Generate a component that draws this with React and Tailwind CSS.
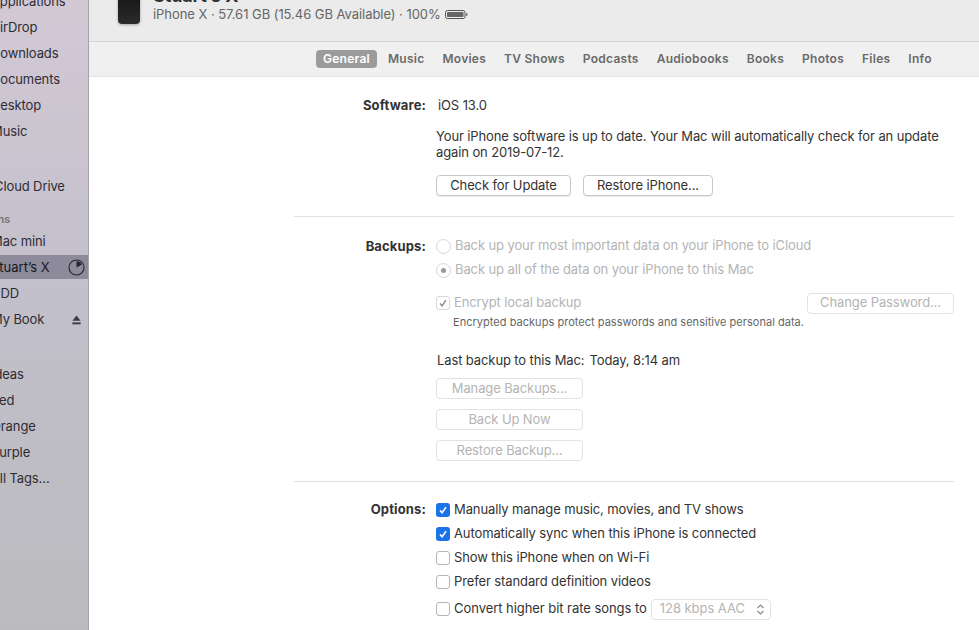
const font = { fontFamily: '"Inter", "Liberation Sans", sans-serif' };

function SideItem({ children, right }) {
  return (
    <div className="flex h-[26px] items-center justify-between whitespace-nowrap pr-[3px] text-[13px] text-[#2e2c33]">
      <span className="ml-[-9px]">{children}</span>
      {right}
    </div>
  );
}

function Pie() {
  return (
    <svg width="17" height="17" viewBox="0 0 17 17">
      <circle cx="8.5" cy="8.5" r="7.5" fill="none" stroke="#26252c" strokeWidth="1.1" />
      <path d="M8.5 8.5V2.2A6.3 6.3 0 0 1 14 5.4Z" fill="#26252c" />
    </svg>
  );
}

function Eject() {
  return (
    <svg width="9" height="10" viewBox="0 0 9 10" className="mr-[4px]">
      <path d="M4.5 0.5L8.6 5.8H0.4Z" fill="#3c3b40" />
      <rect x="0.4" y="7.4" width="8.2" height="1.9" fill="#3c3b40" />
    </svg>
  );
}

function Sidebar() {
  return (
    <div className="h-[630px] w-[89px] shrink-0 overflow-hidden border-r border-[#a5a4aa] bg-gradient-to-b from-[#d2c9d5] via-[#c1bfc9] to-[#bbbbbf]">
      <div className="mt-[-11px]">
        <SideItem>Applications</SideItem>
        <SideItem>AirDrop</SideItem>
        <SideItem>Downloads</SideItem>
        <SideItem>Documents</SideItem>
        <SideItem>Desktop</SideItem>
        <SideItem>Music</SideItem>
      </div>
      <div className="mt-[29px]">
        <SideItem>iCloud Drive</SideItem>
      </div>
      <div className="mt-[10px] flex h-[19px] items-center whitespace-nowrap text-[11px] font-semibold text-[#77757d]">
        <span className="ml-[-41px]">Locations</span>
      </div>
      <SideItem>Mac mini</SideItem>
      <div className="flex h-[24px] items-center justify-between whitespace-nowrap bg-[#8d8b9b] pr-[3px] text-[13px] tracking-normal text-[#16151b]">
        <span className="ml-[-9px] mt-[1px]">Stuart’s X</span>
        <Pie />
      </div>
      <div className="mt-[2px]">
        <SideItem>HDD</SideItem>
      </div>
      <SideItem right={<Eject />}>My Book</SideItem>
      <div className="mt-[29px]">
        <SideItem>Ideas</SideItem>
        <SideItem>Red</SideItem>
        <SideItem>Orange</SideItem>
        <SideItem>Purple</SideItem>
        <SideItem>All Tags...</SideItem>
      </div>
    </div>
  );
}

function Battery() {
  return (
    <svg width="23" height="9" viewBox="0 0 23 9" className="ml-[4px]">
      <rect x="0.5" y="0.5" width="19.5" height="8" rx="2" fill="none" stroke="#555" />
      <rect x="2" y="2" width="16.5" height="5" rx="0.8" fill="#666" />
      <rect x="21" y="3" width="1.4" height="3" rx="0.6" fill="#777" />
    </svg>
  );
}

function Header() {
  return (
    <div className="flex h-[42px] overflow-hidden border-b border-[#d5d5d5] bg-[#ebebeb]">
      <div className="ml-[29px] mt-[-20px] h-[44px] w-[22px] rounded-[4px] bg-gradient-to-b from-[#0d0d0d] to-[#2b2b2b] shadow-[0_1px_3px_rgba(0,0,0,0.3)]" />
      <div className="ml-[13px] mt-[-16px]">
        <div className="h-[22px] whitespace-nowrap text-[18px] font-bold leading-[24px] text-[#333]">Stuart’s X</div>
        <div className="flex items-center whitespace-nowrap text-[13px] leading-[16px] tracking-[-0.05px] text-[#666]">
          iPhone X · 57.61 GB (15.46 GB Available) · 100%
          <Battery />
        </div>
      </div>
    </div>
  );
}

function Tabs() {
  const tabs = ["Music", "Movies", "TV Shows", "Podcasts", "Audiobooks", "Books", "Photos", "Files", "Info"];
  return (
    <div className="flex h-[35px] items-center gap-[4px] border-b border-[#e3e3e3] bg-[#f0f0f0] pb-[1px] pl-[227px] text-[12px] font-semibold tracking-[0.26px]">
      <div className="flex h-[18px] items-center rounded-[4px] bg-[#9b9b9b] px-[7px] text-white">General</div>
      {tabs.map((t) => (
        <div key={t} className="whitespace-nowrap px-[7px] text-[#6a6a6a]">{t}</div>
      ))}
    </div>
  );
}

function Btn({ w, children, disabled }) {
  return (
    <div className={"flex h-[21px] items-center justify-center whitespace-nowrap rounded-[4px] border bg-white text-[13px] " + w + " " + (disabled ? "border-[#e2e2e2] text-[#b4b4b4]" : "border-[#c8c8c8] text-[#333] shadow-[0_1px_0_rgba(0,0,0,0.08)]")}>
      {children}
    </div>
  );
}

function Check({ state }) {
  if (state === "on") {
    return (
      <div className="flex h-[14px] w-[14px] shrink-0 items-center justify-center rounded-[3px] bg-[#1a73e8]">
        <svg width="10" height="10" viewBox="0 0 10 10"><path d="M2 5.4L4.1 7.8L8 2.2" fill="none" stroke="#fff" strokeWidth="1.6" /></svg>
      </div>
    );
  }
  if (state === "dim") {
    return (
      <div className="flex h-[14px] w-[14px] shrink-0 items-center justify-center rounded-[3px] border border-[#d8d8d8] bg-white">
        <svg width="10" height="10" viewBox="0 0 10 10"><path d="M2 5.4L4.1 7.8L8 2.2" fill="none" stroke="#8a8a8a" strokeWidth="1.4" /></svg>
      </div>
    );
  }
  return <div className="h-[14px] w-[14px] shrink-0 rounded-[3px] border border-[#b5b5b5] bg-white" />;
}

function Radio({ on }) {
  return (
    <div className="flex h-[15px] w-[15px] shrink-0 items-center justify-center rounded-full border border-[#d8d8d8] bg-white">
      {on && <div className="h-[5px] w-[5px] rounded-full bg-[#9a9a9a]" />}
    </div>
  );
}

function Opt({ state, children }) {
  return (
    <div className="flex h-[24px] items-center gap-[4px] whitespace-nowrap text-[13px] text-[#333]">
      <Check state={state} />
      <span>{children}</span>
    </div>
  );
}

function Label({ children, className }) {
  return <div className={"w-[132px] shrink-0 text-right text-[13px] font-bold tracking-[0.14px] text-[#333] " + (className || "")}>{children}</div>;
}

function Content() {
  return (
    <div className="pl-[205px] pr-[25px]">
      <div className="flex gap-[10px] pt-[20px]">
        <Label className="h-[16px] leading-[16px]">Software:</Label>
        <div className="flex-1 text-[13px] text-[#333]">
          <div className="ml-[2px] h-[16px] leading-[16px]">iOS 13.0</div>
          <div className="mt-[15px] w-[518px] leading-[16px]">
            Your iPhone software is up to date. Your Mac will automatically check for an update again on 2019-07-12.
          </div>
          <div className="mt-[15px] flex gap-[12px]">
            <Btn w="w-[135px]">Check for Update</Btn>
            <Btn w="w-[130px]">Restore iPhone...</Btn>
          </div>
        </div>
      </div>
      <div className="mt-[20px] h-px bg-[#e0e0e0]" />
      <div className="mt-[21px] flex gap-[10px]">
        <Label className="h-[16px] leading-[16px]">Backups:</Label>
        <div className="mt-[-4px] flex-1 text-[13px] text-[#b4b4b4]">
          <div className="flex h-[24px] items-center gap-[4px]"><Radio /><span>Back up your most important data on your iPhone to iCloud</span></div>
          <div className="flex h-[24px] items-center gap-[4px]"><Radio on /><span>Back up all of the data on your iPhone to this Mac</span></div>
          <div className="mt-[10px] flex h-[22px] items-center justify-between">
            <div className="flex items-center gap-[4px]"><Check state="dim" /><span>Encrypt local backup</span></div>
            <Btn w="w-[147px]" disabled>Change Password...</Btn>
          </div>
          <div className="ml-[17px] h-[16px] text-[11px] leading-[16px] tracking-[0.03px] text-[#666]">Encrypted backups protect passwords and sensitive personal data.</div>
          <div className="ml-[1px] mt-[22px] flex h-[16px] gap-[5px] leading-[16px] text-[#333]">
            <span>Last backup to this Mac:</span>
            <span>Today, 8:14 am</span>
          </div>
          <div className="mt-[10px] flex flex-col gap-[10px]">
            <Btn w="w-[147px]" disabled>Manage Backups...</Btn>
            <Btn w="w-[147px]" disabled>Back Up Now</Btn>
            <Btn w="w-[147px]" disabled>Restore Backup...</Btn>
          </div>
        </div>
      </div>
      <div className="mt-[20px] h-px bg-[#e0e0e0]" />
      <div className="mt-[16px] flex gap-[10px]">
        <Label className="mt-[-1px] h-[24px] leading-[24px]">Options:</Label>
        <div className="flex-1">
          <Opt state="on">Manually manage music, movies, and TV shows</Opt>
          <Opt state="on">Automatically sync when this iPhone is connected</Opt>
          <Opt>Show this iPhone when on Wi-Fi</Opt>
          <Opt>Prefer standard definition videos</Opt>
          <div className="mt-[3px] flex h-[24px] items-center gap-[4px] whitespace-nowrap text-[13px] tracking-[-0.05px] text-[#333]">
            <Check />
            <span>Convert higher bit rate songs to</span>
            <div className="flex h-[21px] w-[120px] items-center justify-between rounded-[4px] border border-[#e2e2e2] bg-white pl-[8px] pr-[5px] text-[#b4b4b4]">
              <span>128 kbps AAC</span>
              <svg width="9" height="13" viewBox="0 0 9 13"><path d="M1.5 5L4.5 2L7.5 5M1.5 8L4.5 11L7.5 8" fill="none" stroke="#8a8a8a" strokeWidth="1.2" /></svg>
            </div>
          </div>
        </div>
      </div>
    </div>
  );
}

export default function App() {
  return (
    <div className="flex h-[630px] w-[979px] overflow-hidden bg-white tracking-[-0.11px]" style={font}>
      <Sidebar />
      <div className="min-w-0 flex-1">
        <Header />
        <Tabs />
        <Content />
      </div>
    </div>
  );
}
